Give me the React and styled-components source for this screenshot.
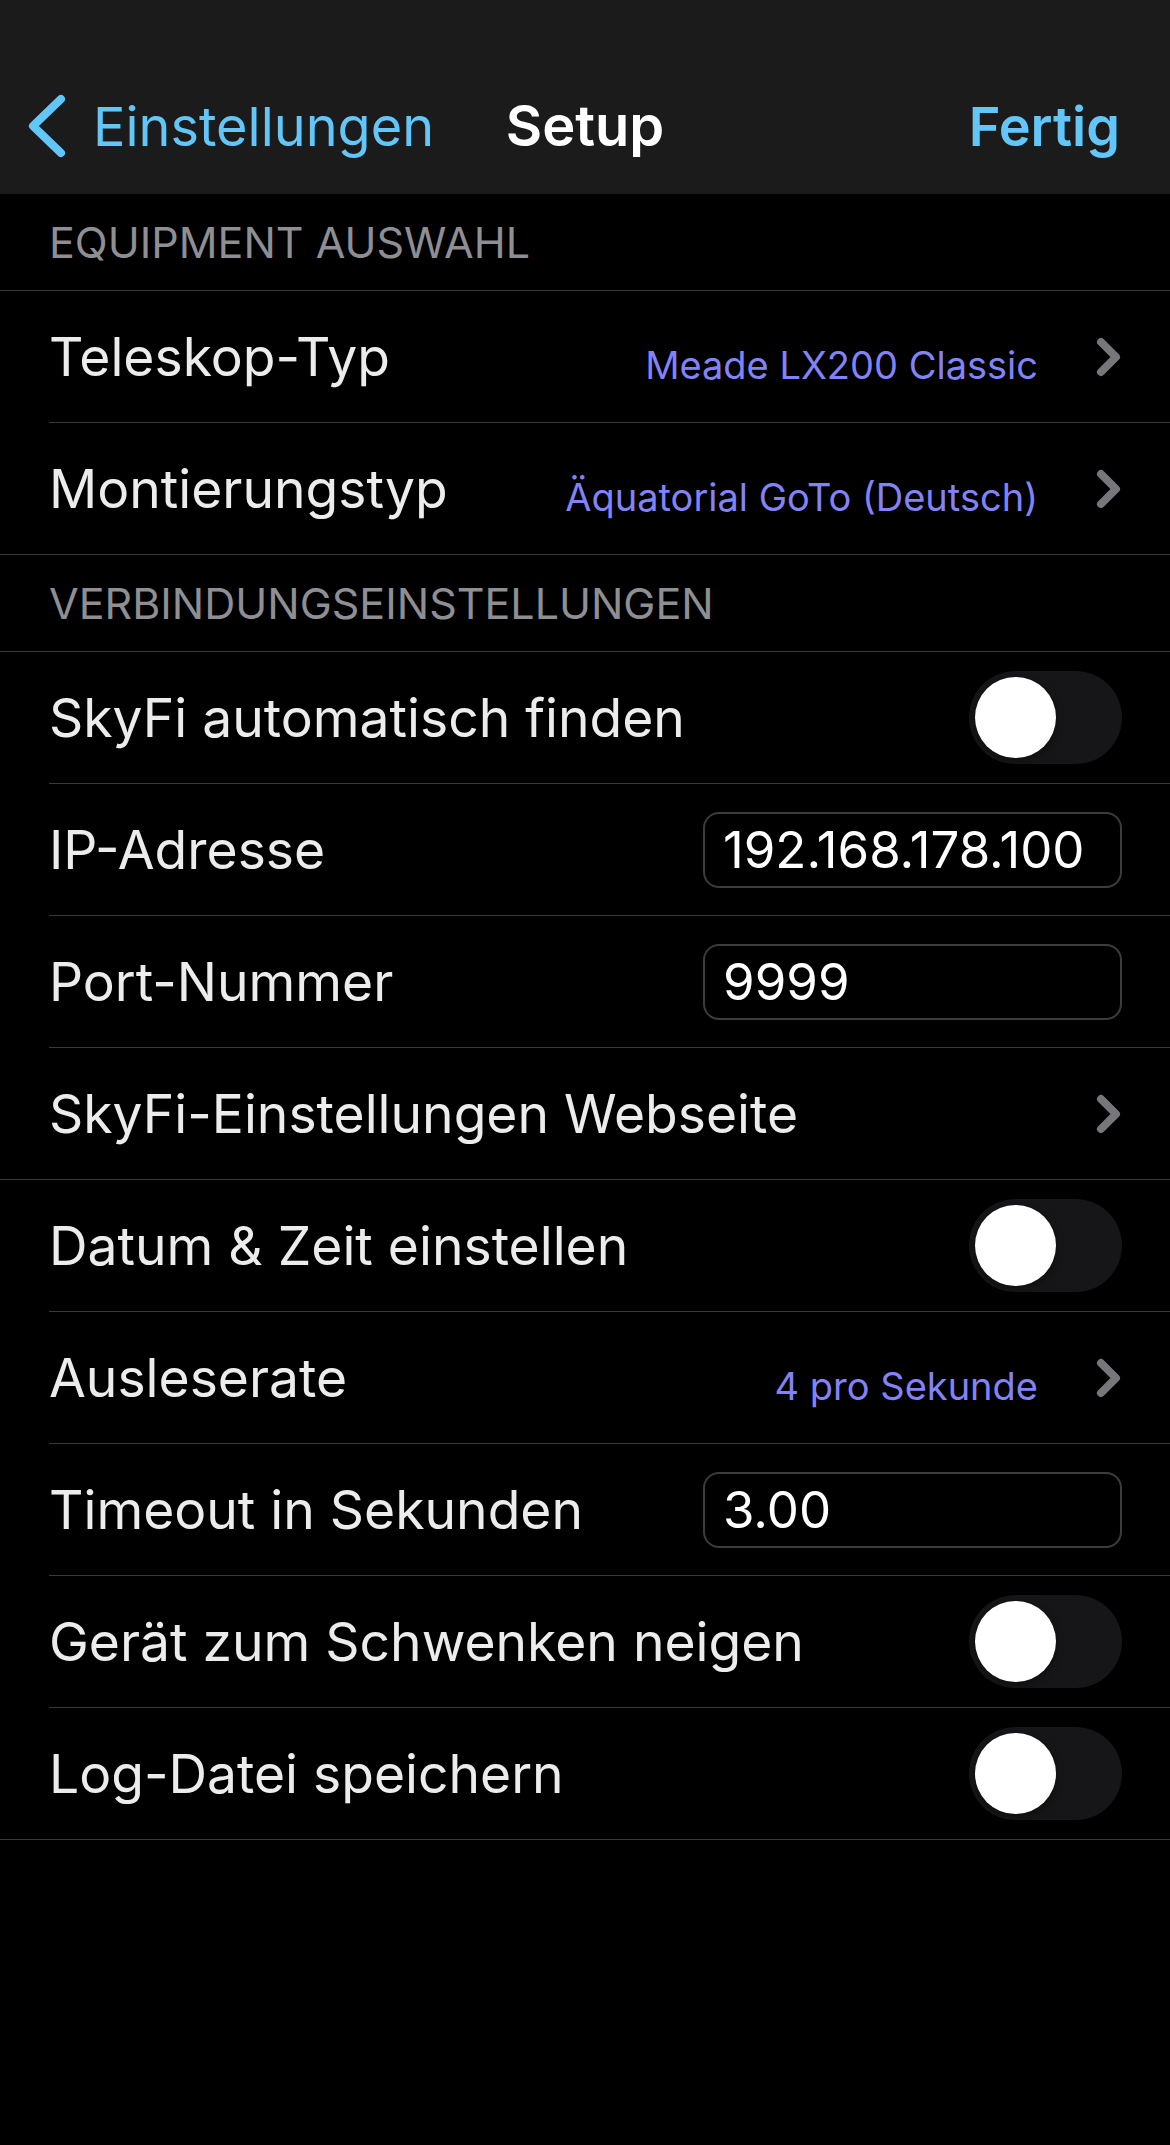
import React from "react";
import styled, { createGlobalStyle } from "styled-components";

const GlobalStyle = createGlobalStyle`
  html, body {
    margin: 0;
    padding: 0;
    background: #000;
  }
  body {
    font-family: Inter, "Liberation Sans", sans-serif;
    -webkit-font-smoothing: antialiased;
  }
`;

const Screen = styled.div`
  width: 1170px;
  min-height: 2145px;
  background: #000;
  display: flex;
  flex-direction: column;
`;

const NavBar = styled.div`
  background: #1b1b1b;
  height: 194px;
  padding: 58px 28px 0 28px;
  box-sizing: border-box;
  display: grid;
  grid-template-columns: 1fr auto 1fr;
  align-items: center;
`;

const BackButton = styled.div`
  display: flex;
  align-items: center;
  gap: 27px;
  color: #62c6f8;
  font-size: 54px;
  font-weight: 400;
`;

const NavTitle = styled.div`
  color: #fff;
  font-size: 56px;
  font-weight: 600;
`;

const DoneButton = styled.div`
  justify-self: end;
  margin-right: 22px;
  color: #62c6f8;
  font-size: 54px;
  font-weight: 600;
`;

const SectionHeader = styled.div`
  height: 96px;
  border-bottom: 1px solid #38383a;
  padding-left: 49px;
  display: flex;
  align-items: center;
  color: #8e8e93;
  font-size: 43px;
  font-weight: 400;
`;

const Group = styled.div`
  border-bottom: 1px solid #38383a;
`;

const Row = styled.div`
  padding-left: 49px;
`;

const RowInner = styled.div`
  height: 131px;
  display: flex;
  align-items: center;
  padding-right: 48px;
  border-bottom: ${({ $last }) => ($last ? "none" : "1px solid #38383a")};
`;

const Label = styled.div`
  flex: 1;
  color: #ececec;
  font-size: 53.4px;
  font-weight: 400;
  white-space: nowrap;
`;

const Value = styled.div`
  color: #8383f7;
  font-size: 38px;
  font-weight: 400;
  margin: 16px 58px 0 0;
  white-space: nowrap;
`;

const Track = styled.div`
  width: 153px;
  height: 93px;
  border-radius: 47px;
  background: #161618;
  display: flex;
  align-items: center;
  padding: 0 6px;
  box-sizing: border-box;
  justify-content: ${({ $on }) => ($on ? "flex-end" : "flex-start")};
`;

const Knob = styled.div`
  width: 81px;
  height: 81px;
  border-radius: 50%;
  background: #fff;
  box-shadow: 0 3px 8px rgba(0, 0, 0, 0.35), 0 0 0 1px rgba(0, 0, 0, 0.04);
`;

const Field = styled.div`
  width: 419px;
  height: 76px;
  box-sizing: border-box;
  border: 2px solid #3c3c3e;
  border-radius: 16px;
  padding-left: 18px;
  display: flex;
  align-items: center;
  color: #fff;
  font-size: 51px;
  font-weight: 400;
`;

const ChevronRight = () => (
  <svg width="26" height="40" viewBox="0 0 26 40">
    <polyline
      points="5,5 20,20 5,35"
      fill="none"
      stroke="#76767b"
      strokeWidth="8"
      strokeLinecap="round"
      strokeLinejoin="round"
    />
  </svg>
);

const ChevronLeft = () => (
  <svg width="38" height="64" viewBox="0 0 38 64">
    <polyline
      points="33,5 5,32 33,59"
      fill="none"
      stroke="#62c6f8"
      strokeWidth="8"
      strokeLinecap="round"
      strokeLinejoin="round"
    />
  </svg>
);

const Toggle = ({ on }) => (
  <Track $on={on}>
    <Knob />
  </Track>
);

const SettingRow = ({ label, value, chevron, toggle, field, last }) => (
  <Row>
    <RowInner $last={last}>
      <Label>{label}</Label>
      {value && <Value>{value}</Value>}
      {chevron && <ChevronRight />}
      {toggle && <Toggle on={false} />}
      {field && <Field>{field}</Field>}
    </RowInner>
  </Row>
);

const App = () => {
  return (
    <>
      <GlobalStyle />
      <Screen>
        <NavBar>
          <BackButton>
            <ChevronLeft />
            Einstellungen
          </BackButton>
          <NavTitle>Setup</NavTitle>
          <DoneButton>Fertig</DoneButton>
        </NavBar>

        <SectionHeader>EQUIPMENT AUSWAHL</SectionHeader>
        <Group>
          <SettingRow label="Teleskop-Typ" value="Meade LX200 Classic" chevron />
          <SettingRow
            label="Montierungstyp"
            value="Äquatorial GoTo (Deutsch)"
            chevron
            last
          />
        </Group>

        <SectionHeader>VERBINDUNGSEINSTELLUNGEN</SectionHeader>
        <Group>
          <SettingRow label="SkyFi automatisch finden" toggle />
          <SettingRow label="IP-Adresse" field="192.168.178.100" />
          <SettingRow label="Port-Nummer" field="9999" />
          <SettingRow label="SkyFi-Einstellungen Webseite" chevron last />
        </Group>
        <Group>
          <SettingRow label="Datum & Zeit einstellen" toggle />
          <SettingRow label="Ausleserate" value="4 pro Sekunde" chevron />
          <SettingRow label="Timeout in Sekunden" field="3.00" />
          <SettingRow label="Gerät zum Schwenken neigen" toggle />
          <SettingRow label="Log-Datei speichern" toggle last />
        </Group>
      </Screen>
    </>
  );
};

export default App;
